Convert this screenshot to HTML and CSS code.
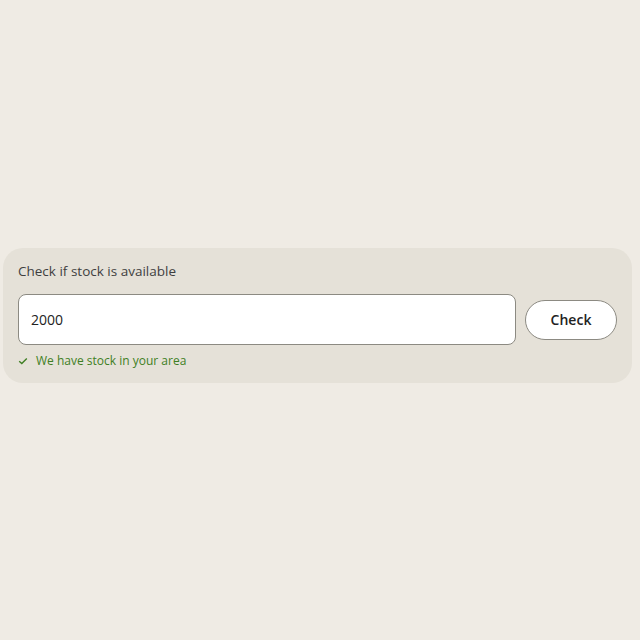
FILE: index.html
```html
<!DOCTYPE html>
<html lang="en">
<head>
    <meta charset="UTF-8">
    <title>Stock check</title>
    <link rel="stylesheet" href="styles.css">
</head>
<body>
    <div class="stock-card">
        <label class="stock-label" for="postcode">Check if stock is available</label>
        <div class="stock-row">
            <input type="text" id="postcode" class="stock-input" value="2000">
            <button class="stock-button">Check</button>
        </div>
        <div class="stock-status">
            <svg width="10" height="10" viewBox="0 0 10 10"><path d="M1.2 5.2 L3.8 7.6 L8.8 2.4" fill="none" stroke="#3f7f24" stroke-width="1.4"/></svg>
            <span>We have stock in your area</span>
        </div>
    </div>
</body>
</html>
```

FILE: styles.css
```css
body {
    margin: 0;
    background-color: #efebe4;
    font-family: 'Open Sans', sans-serif;
    height: 640px;
    display: flex;
    align-items: center;
    padding: 0 8px 0 3px;
    box-sizing: border-box;
}

.stock-card {
    flex-grow: 1;
    background-color: #e5e1d8;
    border-radius: 20px;
    padding: 14px 15px 14px 15px;
    margin-top: -9px;
}

.stock-label {
    display: block;
    font-size: 13.5px;
    color: #3f3f3f;
    margin-bottom: 14px;
}

.stock-row {
    display: flex;
    align-items: center;
    gap: 9px;
}

.stock-input {
    flex-grow: 1;
    height: 51px;
    box-sizing: border-box;
    border: 1px solid #8c8a82;
    border-radius: 8px;
    background: #fff;
    padding: 0 12px;
    font-family: inherit;
    font-size: 14px;
    color: #222;
    outline: none;
}

.stock-button {
    width: 92px;
    height: 40px;
    border: 1px solid #8c8a82;
    border-radius: 20px;
    background: #fff;
    font-family: inherit;
    font-size: 14px;
    font-weight: 600;
    color: #222;
}

.stock-status {
    display: flex;
    align-items: center;
    gap: 8px;
    margin-top: 7px;
    font-size: 12px;
    color: #3f7f24;
}
```
